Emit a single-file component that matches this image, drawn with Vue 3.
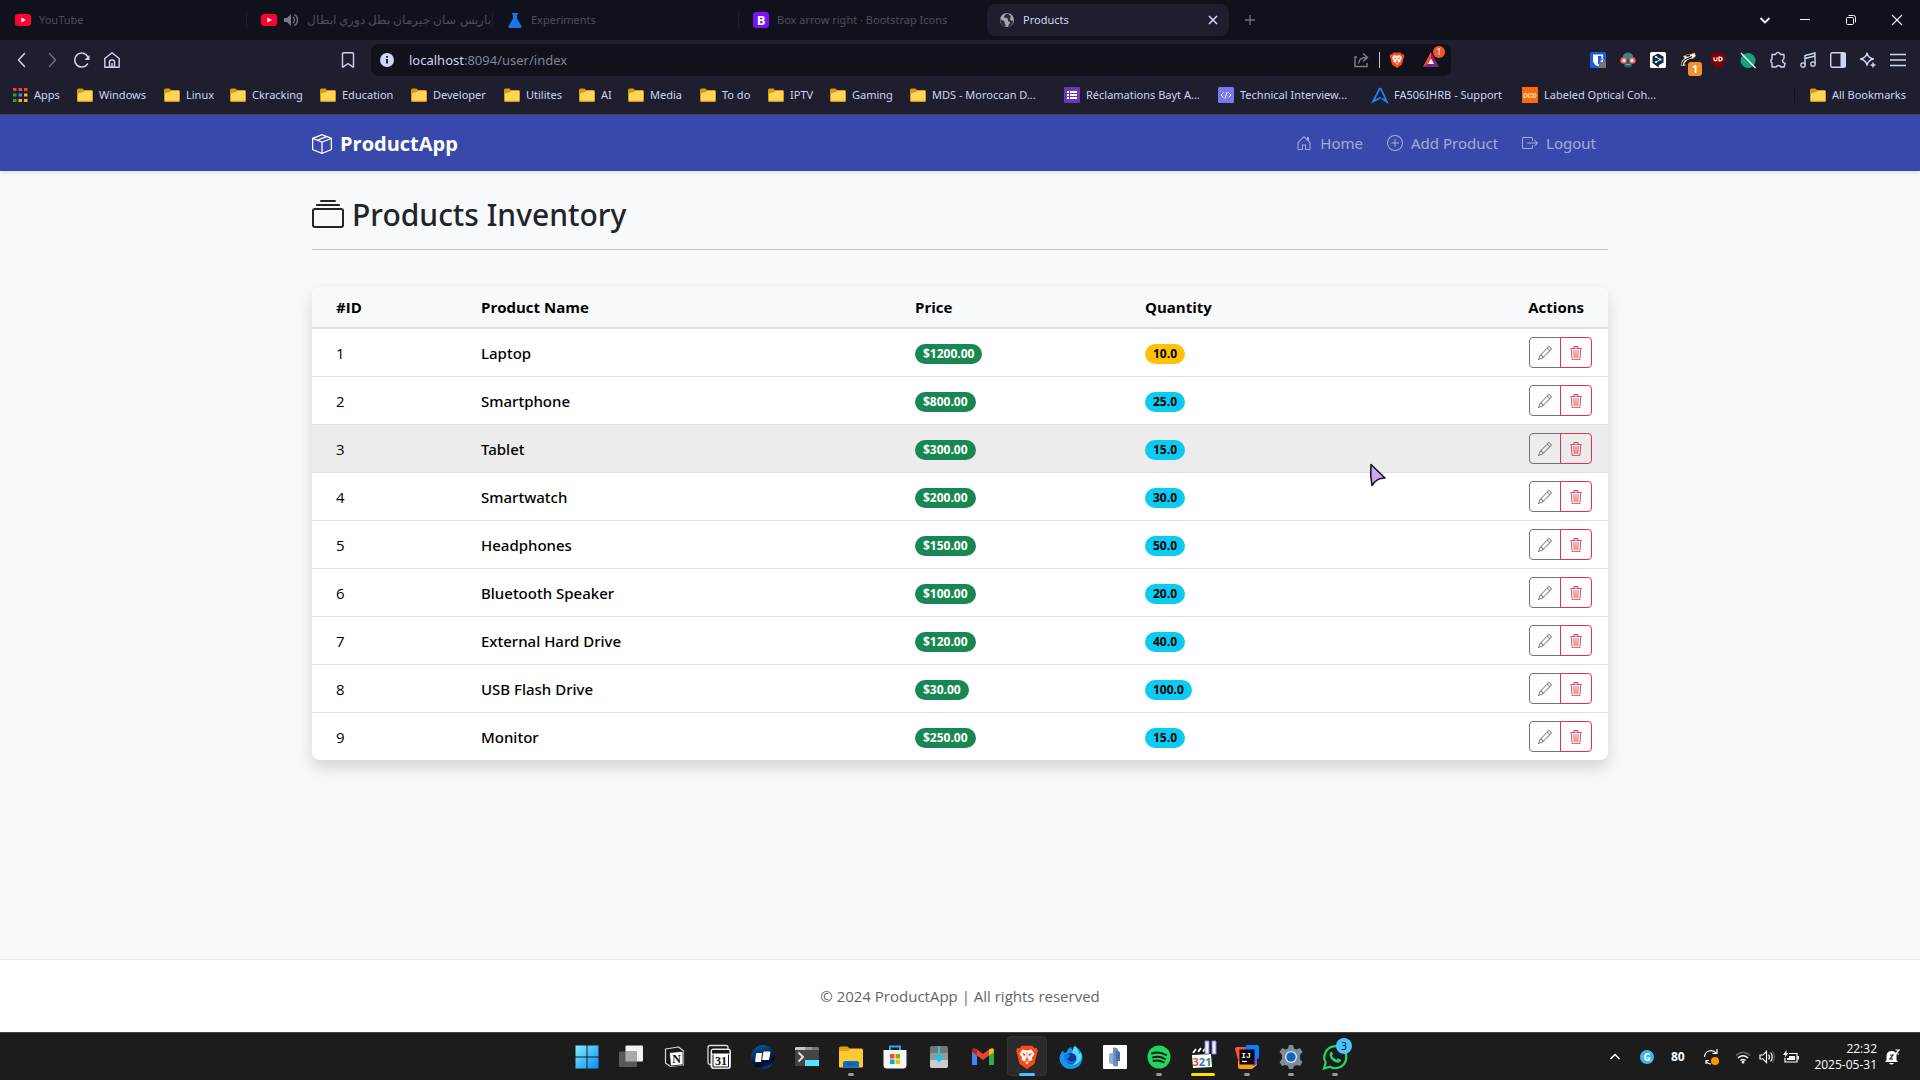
<script setup>
import { ref } from 'vue'

const art = {
  youtube: '<rect x="0" y="2" width="16" height="12" rx="3" fill="#ff0033"/><path d="M6.3 5.4v5.2L10.8 8z" fill="#fff"/>',
  speaker: '<path d="M1 6h3l4-4v12l-4-4H1z" fill="#777987"/><path d="M10 5c2 1.500 2 4.500 0 6M11.500 2.500c4 2.500 4 8.500 0 11" fill="none" stroke="#777987" stroke-width="1.300"/>',
  flask: '<path d="M5 1h6v1.500h-1v4l4.500 7.500q.6 2-1.500 2H3q-2.100 0-1.500-2L6 6.500v-4H5z" fill="#1a73e8"/>',
  bootstrap: '<rect width="16" height="16" rx="3" fill="#7a14f8"/><text x="8" y="13" text-anchor="middle" font-size="13" font-weight="700" font-family="Open Sans, sans-serif" fill="#fff">B</text>',
  globe: '<circle cx="8" cy="8" r="7" fill="#a3a7ac"/><path d="M9 1.500c-3 1-4 2-4 3.500 1.500 1.500 4 .5 4 2.500-1 2 2 1.500 2 3.500-1 2-2 2-2 3.500 3 0 5-2.500 5-6-2 1-3-.5-3-2 1-1.500 1-2 0-3zM1.500 7c1.500 1.500 4 1.500 4 3s1.500 2 1 4.500C3 14 1 11 1.500 7z" fill="#2a2c38"/>',
  close: '<path d="M4 4l8 8M12 4l-8 8" stroke="currentColor" stroke-width="1.600" fill="none"/>',
  plus: '<path d="M8 3v10M3 8h10" stroke="currentColor" stroke-width="1.300" fill="none"/>',
  chevDown: '<path d="M3.500 6L8 10.500 12.500 6" stroke="currentColor" stroke-width="1.800" fill="none"/>',
  chevUp: '<path d="M3.500 10L8 5.500 12.500 10" stroke="currentColor" stroke-width="1.500" fill="none"/>',
  minimize: '<path d="M3 7.500h10" stroke="currentColor" fill="none"/>',
  restore: '<rect x="3.500" y="5.500" width="7" height="7" rx="1" stroke="currentColor" fill="none"/><path d="M5.500 3.500h5q2 0 2 2v5" stroke="currentColor" fill="none"/>',
  winClose: '<path d="M3 3l10 10M13 3L3 13" stroke="currentColor" stroke-width="1.100" fill="none"/>',
  back: '<path d="M10.500 1.500L4.500 8l6 6.500" stroke="currentColor" stroke-width="1.500" fill="none" stroke-linecap="round" stroke-linejoin="round"/>',
  forward: '<path d="M5.500 1.500l6 6.500-6 6.500" stroke="currentColor" stroke-width="1.500" fill="none" stroke-linecap="round" stroke-linejoin="round"/>',
  reload: '<path d="M13.500 12A7 7 0 1 1 14 5" stroke="currentColor" stroke-width="1.500" fill="none" stroke-linecap="round"/><path d="M15.500 3v5h-5z" fill="currentColor"/>',
  home: '<path d="M.8 6.500L8 .8l7.200 5.700v8.700H.8zM5.500 15V9.500q0-1.500 2.500-1.500t2.500 1.500V15M8 15v-4" stroke="currentColor" stroke-width="1.400" fill="none" stroke-linejoin="round"/>',
  bookmark: '<path d="M2.500 2q0-1.200 1.200-1.200h8.600q1.200 0 1.200 1.200v12.600q0 .9-.8.3L8 11.500l-4.700 3.400q-.8.6-.8-.3z" stroke="currentColor" stroke-width="1.400" fill="none"/>',
  info: '<circle cx="8" cy="8" r="7" fill="#cdd6f4"/><path d="M8 7v4.500M8 4v1.800" stroke="#11111b" stroke-width="1.800"/>',
  share: '<path d="M3 5H1v9.500h12V11M4.500 11.500C5 7 8 5.500 12 5.500M9 1.500l4.500 4L9 9.500" stroke="#7d8091" stroke-width="1.400" fill="none"/>',
  brave: '<path d="M4.500.5h7L13 2.200l1.500-.2.800 2.200-.5 1L13 12.500 8 16 3 12.500 1.200 5.200l-.5-1L1.500 2l1.500.2z" fill="#fb4a16"/><path d="M5 3l3 .7L11 3l2 3-1.700 2.300.3 1.700-2 .8L8 13l-1.600-2.200-2-.8.3-1.700L3 6z" fill="#fff"/><path d="M5 5.500l1.700.7-.4 1.300zM11 5.500l-1.700.7.4 1.300zM8 4.500v4l-1 1.200h2L8 8.500M6.500 11L8 10l1.500 1z" fill="#fb4a16" stroke="#fb4a16" stroke-width=".4"/>',
  bat: '<path d="M8 0L0 15h16z" fill="#9e1f63"/><path d="M8 0L0 15l5-3 3-5.500z" fill="#ff4724"/><path d="M0 15h16l-5-3H5z" fill="#662d91"/><path d="M8 6.500L5 12h6z" fill="#fff"/>',
  folder: '<path d="M0 3q0-1.500 1.500-1.500h3.800L7 3h7.500Q16 3 16 4.500v9q0 1.500-1.500 1.500h-13Q0 15 0 13.500z" fill="#d79b13"/><path d="M1 6.500L6 5l1.500-1H15v9.800H1z" fill="#ffd65c"/>',
  apps: '<path d="M1 1h3.500v3H1zM6.500 1H10v3H6.500zM12 1h3.500v3H12z" fill="#f04438"/><path d="M1 6.500h3.500v3H1zM1 12h3.500v3H1z" fill="#2e9e4f"/><path d="M6.500 6.500H10v3H6.500z" fill="#2d8cff"/><path d="M12 6.500h3.500v3H12zM6.500 12H10v3H6.500zM12 12h3.500v3H12z" fill="#fbb114"/>',
  form: '<rect width="16" height="16" rx="1" fill="#673ab7"/><path d="M3 4h2v2H3zM6 4h7v2H6zM3 7h2v2H3zM6 7h7v2H6zM3 10h2v2H3zM6 10h7v2H6z" fill="#fff"/>',
  code: '<rect width="16" height="16" rx="1.500" fill="#7b78ee"/><path d="M5.500 5.500L3 8l2.500 2.500M10.500 5.500L13 8l-2.500 2.500M9 5l-2 6.500" stroke="#fff" stroke-width="1" fill="none"/>',
  asus: '<path d="M8.500 1L15 15l-5-3.500M8 1L1 14.500l8-4" fill="none" stroke="#1b86ff" stroke-width="1.700"/>',
  dcd: '<rect width="16" height="16" fill="#ff6b0a"/><text x="8" y="10.500" text-anchor="middle" font-size="7" font-weight="700" font-family="Roboto, sans-serif" fill="#ffe5d0">DCD</text>',
  shieldLock: '<rect width="16" height="16" rx="1.500" fill="#175ddc"/><path d="M3 2.500h10V9q-1 3.500-5 5.500Q4 12.500 3 9z" fill="#fff"/><path d="M8 4h3.500v4.500Q11 11 8 12.500z" fill="#175ddc"/><rect x="9" y="10" width="7" height="6" rx="1" fill="#777"/><path d="M10.500 10V8.500q2-2.500 4 0V10" fill="none" stroke="#888" stroke-width="1.200"/>',
  agent: '<path d="M2.500 7Q2.500 .5 8 .5t5.500 6.500z" fill="#3f8189"/><rect x="4" y="7" width="8" height="8.500" rx="2" fill="#2d5560"/><circle cx="3.500" cy="8.500" r="3.200" fill="#f2604b"/><circle cx="12.500" cy="8.500" r="3.200" fill="#f2604b"/><circle cx="4" cy="8.500" r="1.700" fill="#ffe9e4"/><circle cx="12" cy="8.500" r="1.700" fill="#ffe9e4"/><path d="M5.500 12.500h5" stroke="#56b6c2" stroke-width="1.500"/>',
  deepl: '<rect width="16" height="16" rx="1.500" fill="#fff"/><path d="M8 1.500l5.500 3v6L9 13l-.5 2.500L2.500 11V4.500z" fill="#0f2b46"/><path d="M6 5l4.500 2.500L6 10" stroke="#fff" fill="none"/><circle cx="6" cy="5" r="1.100" fill="#fff"/><circle cx="10.500" cy="7.500" r="1.100" fill="#fff"/><circle cx="6" cy="10" r="1.100" fill="#fff"/>',
  badger: '<path d="M1 13.500Q1.500 8 5 6L3.500 4.500Q7 2 11 2.500L14.500 1 15.500 4 13 6.500H9.500L6 9.500 5 13.500z" fill="#fff" stroke="#ef9b4a" stroke-width=".8"/><path d="M2 13Q3 8.500 6.500 7L12 4.500M6 4l4-.5M4.500 12.500L8 8.500" stroke="#171717" stroke-width="1.300" fill="none"/>',
  ublock: '<path d="M8 0l7 2.200V8q0 4.500-7 8Q1 12.500 1 8V2.200z" fill="#800000"/><path d="M4 5.200v2q0 1.600 1.500 1.600T7 7.200v-2M9 8.800V5.200q3.200 0 3.200 1.800T9 8.800z" fill="none" stroke="#fff" stroke-width="1.200"/>',
  disabledDot: '<circle cx="8" cy="8.500" r="7.500" fill="#14a37f"/><path d="M1 1l14.500 15" stroke="#fff" stroke-width="1.200"/>',
  puzzle: '<path d="M2 2.500h3.500Q6 .5 8 .5t2.500 2H14v4q-1.500 1-1.500 2.500T15 11.500l-1 3.500h-3q-1-1.500-2.500-1.500T6 15H2v-4Q.8 10.500.8 9T2 7z" stroke="currentColor" stroke-width="1.400" fill="none" stroke-linejoin="round"/>',
  music: '<path d="M5 13V3.500L15 1v10.500M5 6.500L15 4" stroke="currentColor" stroke-width="1.400" fill="none"/><circle cx="3" cy="13" r="2.200" stroke="currentColor" stroke-width="1.300" fill="none"/><circle cx="13" cy="12" r="2.200" stroke="currentColor" stroke-width="1.300" fill="none"/>',
  sidebar: '<rect x=".7" y=".7" width="14.600" height="14.600" rx="1.500" stroke="currentColor" stroke-width="1.400" fill="none"/><path d="M10.500 1h5v14h-5z" fill="currentColor"/>',
  sparkle: '<path d="M7 1q1 5 6.500 6Q8 8 7 13.500 6 8 .5 7 6 6 7 1z" stroke="currentColor" stroke-width="1.300" fill="none" stroke-linejoin="round"/><path d="M13 10.500v5M10.500 13h5" stroke="currentColor" stroke-width="1.500"/>',
  menu: '<path d="M0 2.500h16M0 8h16M0 13.500h16" stroke="currentColor" stroke-width="1.500"/>',
  box: '<path fill="currentColor" d="M8.186 1.113a.5.5 0 0 0-.372 0L1.846 3.5l2.404.961L10.404 2zm3.564 1.426L5.596 5 8 5.961 14.154 3.5zm3.250 1.700-6.500 2.600v7.922l6.500-2.600V4.240zM7.500 14.762V6.838L1 4.239v7.923zM7.443.184a1.500 1.500 0 0 1 1.114 0l7.129 2.852A.5.5 0 0 1 16 3.500v8.662a1 1 0 0 1-.629.928l-7.185 2.874a.5.5 0 0 1-.372 0L.63 13.090a1 1 0 0 1-.63-.928V3.500a.5.5 0 0 1 .314-.464z"/>',
  houseDoor: '<path fill="currentColor" d="M8.354 1.146a.5.5 0 0 0-.708 0l-6 6A.5.5 0 0 0 1.500 7.500v7a.5.5 0 0 0 .5.5h4.500a.5.5 0 0 0 .5-.5v-4h2v4a.5.5 0 0 0 .5.5H14a.5.5 0 0 0 .5-.5v-7a.5.5 0 0 0-.146-.354L13 5.793V2.500a.5.5 0 0 0-.5-.5h-1a.5.5 0 0 0-.5.5v1.293zM2.500 14V7.707l5.500-5.500 5.500 5.500V14H10v-4a.5.5 0 0 0-.5-.5h-3a.5.5 0 0 0-.5.5v4z"/>',
  plusCircle: '<path fill="currentColor" d="M8 15A7 7 0 1 1 8 1a7 7 0 0 1 0 14m0 1A8 8 0 1 0 8 0a8 8 0 0 0 0 16"/><path fill="currentColor" d="M8 4a.5.5 0 0 1 .5.5v3h3a.5.5 0 0 1 0 1h-3v3a.5.5 0 0 1-1 0v-3h-3a.5.5 0 0 1 0-1h3v-3A.5.5 0 0 1 8 4"/>',
  boxArrow: '<path fill="currentColor" d="M10 12.500a.5.5 0 0 1-.5.5h-8a.5.5 0 0 1-.5-.5v-9a.5.5 0 0 1 .5-.5h8a.5.5 0 0 1 .5.5v2a.5.5 0 0 0 1 0v-2A1.500 1.500 0 0 0 9.500 2h-8A1.500 1.500 0 0 0 0 3.500v9A1.500 1.500 0 0 0 1.500 14h8a1.500 1.500 0 0 0 1.500-1.500v-2a.5.5 0 0 0-1 0z"/><path fill="currentColor" d="M15.854 8.354a.5.5 0 0 0 0-.708l-3-3a.5.5 0 0 0-.708.708L14.293 7.500H5.500a.5.5 0 0 0 0 1h8.793l-2.147 2.146a.5.5 0 0 0 .708.708z"/>',
  collection: '<path fill="currentColor" d="M2.500 3.500a.5.5 0 0 1 0-1h11a.5.5 0 0 1 0 1zm2-2a.5.5 0 0 1 0-1h7a.5.5 0 0 1 0 1zM0 13a1.500 1.500 0 0 0 1.500 1.500h13A1.500 1.500 0 0 0 16 13V6a1.500 1.500 0 0 0-1.500-1.500h-13A1.500 1.500 0 0 0 0 6zm1.500.5A.5.5 0 0 1 1 13V6a.5.5 0 0 1 .5-.5h13a.5.5 0 0 1 .5.5v7a.5.5 0 0 1-.5.5z"/>',
  pencil: '<path fill="currentColor" d="M12.146.146a.5.5 0 0 1 .708 0l3 3a.5.5 0 0 1 0 .708l-10 10a.5.5 0 0 1-.168.110l-5 2a.5.5 0 0 1-.65-.65l2-5a.5.5 0 0 1 .110-.168zM11.207 2.500 13.500 4.793 14.793 3.500 12.500 1.207zm1.586 3L10.500 3.207 4 9.707V10h.5a.5.5 0 0 1 .5.5v.5h.5a.5.5 0 0 1 .5.5v.5h.293zm-9.761 5.175-.106.106-1.528 3.821 3.821-1.528.106-.106A.5.5 0 0 1 5 12.500V12h-.5a.5.5 0 0 1-.5-.5V11h-.5a.5.5 0 0 1-.468-.325"/>',
  trash: '<path fill="currentColor" d="M6.500 1h3a.5.5 0 0 1 .5.5v1H6v-1a.5.5 0 0 1 .5-.5M11 2.500v-1A1.500 1.500 0 0 0 9.500 0h-3A1.500 1.500 0 0 0 5 1.500v1H1.500a.5.5 0 0 0 0 1h.538l.853 10.660A2 2 0 0 0 4.885 16h6.230a2 2 0 0 0 1.994-1.840l.853-10.660h.538a.5.5 0 0 0 0-1zm1.958 1-.846 10.580a1 1 0 0 1-.997.920h-6.230a1 1 0 0 1-.997-.920L3.042 3.500zm-7.487 1a.5.5 0 0 1 .528.470l.5 8.500a.5.5 0 0 1-.998.060L5 5.030a.5.5 0 0 1 .470-.530Zm5.058 0a.5.5 0 0 1 .470.530l-.5 8.500a.5.5 0 1 1-.998-.060l.5-8.500a.5.5 0 0 1 .528-.470M8 4.500a.5.5 0 0 1 .5.5v8.500a.5.5 0 0 1-1 0V5a.5.5 0 0 1 .5-.5"/>',
}

/* Taskbar artwork is drawn on a 24 x 24 grid. */
const taskArt = {
  start: '<defs><linearGradient id="win" x1="0" y1="0" x2="1" y2="1"><stop offset="0" stop-color="#7df0ff"/><stop offset="1" stop-color="#0a8cf8"/></linearGradient></defs><path d="M.5.5h11v11H.5zM12.500.5h11v11h-11zM.5 12.500h11v11H.5zM12.500 12.500h11v11h-11z" fill="url(#win)"/>',
  taskView: '<rect x="6.500" y=".5" width="17.500" height="16" rx="1" fill="#f2f2f2"/><rect x="0" y="6.500" width="18" height="15.500" rx="1" fill="#5a5a5a"/><path d="M6.500 6.500H18v10H6.500z" fill="#a9a9a9"/>',
  notion: '<path d="M2.500 4l13-2 5 4v14l-13 1.500L2.500 18z" fill="#181818" stroke="#d8d8d8" stroke-width="1.200" stroke-linejoin="round"/><path d="M6.500 7.500L20 6.300v13.500L7.500 21z" fill="#fff" stroke="#111" stroke-width=".8"/><text x="13.500" y="18" text-anchor="middle" font-size="12" font-weight="700" font-family="Liberation Serif, serif" fill="#111">N</text>',
  calendar: '<rect x="1" y=".5" width="20" height="19" rx="2" fill="#171717" stroke="#ddd" stroke-width="1.300"/><rect x="4" y="4" width="19.500" height="19.500" rx="2" fill="#fff" stroke="#ddd"/><path d="M5 8.500h17.500V6q0-1-1-1H6Q5 5 5 6z" fill="#171717"/><path d="M6 9.500v12.500h15.500V9.500" fill="none" stroke="#171717" stroke-width="1"/><text x="14" y="20" text-anchor="middle" font-size="12" font-weight="700" font-family="Liberation Serif, serif" fill="#111">31</text>',
  tide: '<defs><linearGradient id="tide" x1=".2" y1="0" x2=".6" y2="1"><stop offset="0" stop-color="#0a5c9c"/><stop offset=".5" stop-color="#042652"/><stop offset=".8" stop-color="#020a2c"/><stop offset="1" stop-color="#0a4a86"/></linearGradient></defs><circle cx="12" cy="12" r="12" fill="url(#tide)"/><path d="M6 8h5l-1 9H5q-1 0-.8-1.200L5 9q.2-1 1-1zM12.500 6.500h6q1 0 .8 1.200l-1 6.300q-.2 1-1.200 1h-6z" fill="#fff"/>',
  terminal: '<rect y="2" width="24" height="19" rx="1.500" fill="#444"/><path d="M0 5V3.500Q0 2 1.500 2H10v3z" fill="#c8c8c8"/><path d="M10 2h7v3h-7z" fill="#999"/><path d="M17 2h5.500Q24 2 24 3.500V5h-7z" fill="#777"/><path d="M3.500 7.500L8 12l-4.500 4.500" fill="none" stroke="#ddd" stroke-width="2"/><rect x="10" y="15" width="14" height="6" fill="#50e6ff"/>',
  explorer: '<path d="M0 3q0-1.500 1.500-1.500h7L11 4v5H0z" fill="#e5a00d"/><path d="M0 6h9l2-2.500h11.500Q24 3.500 24 5v16.500q0 1-1 1H1q-1 0-1-1z" fill="#ffca2f"/><path d="M4 22.500V18q0-2 2-2h12q2 0 2 2v4.500z" fill="#0a6fc9"/><path d="M8 19h8" stroke="#064b92"/>',
  store: '<path d="M7 6V1.500h10V6" fill="none" stroke="#22aef0" stroke-width="2"/><path d="M.5 5h23v15q0 3.500-3.500 3.500H4Q.5 23.500.5 20z" fill="#f6f6f6"/><path d="M7 9h4.500v4.500H7z" fill="#f25022"/><path d="M12.500 9H17v4.500h-4.500z" fill="#7fba00"/><path d="M7 14.500h4.500V19H7z" fill="#00a4ef"/><path d="M12.500 14.500H17V19h-4.500z" fill="#ffb900"/>',
  download: '<rect x="3" y="1" width="18" height="22" rx="2" fill="#777"/><path d="M3 8h18v7H3z" fill="#999"/><path d="M3 15h18v6q0 2-2 2H5q-2 0-2-2z" fill="#ccc"/><path d="M12 1v14M7 11l5 5 5-5" stroke="#12ccf5" stroke-width="2" fill="none"/>',
  gmail: '<path d="M1 20V5.500L6 9v11H2.500Q1 20 1 20z" fill="#4285f4"/><path d="M18 9l5-3.500V20h-5z" fill="#34a853"/><path d="M18 4.500q5-3 5 1V7l-5 3.500z" fill="#fbbc04"/><path d="M6 4.500l6 4.500 6-4.500v6L12 15l-6-4.500z" fill="#ea4335"/><path d="M1 5.500q0-4 5-1v6L1 7z" fill="#c5221f"/>',
  firefox: '<path d="M12 24C4 24 .5 18 .5 12.500 1 9 2.500 7 4 5.500L5 8l3-1c0-2 1-4 4-5 0 2 2 3 3 4l1-5.500c4 3 7.500 7 7.500 12C23.500 19 18.500 24 12 24z" fill="#1397f0"/><path d="M15 1c4 3 5 5 5 8l2-1c2 6-2 11-8 12 4-4 3-9-1-11z" fill="#57dcff"/><circle cx="12" cy="13.500" r="5.500" fill="#17349b"/><path d="M5 9l6 1-1 3H8c1 4 6 5 9 2-1 5-11 5-12-3z" fill="#167ae6"/>',
  document: '<rect width="24" height="24" rx="1" fill="#fff"/><path d="M6 9.500Q6 8 8 8h5v11q-7 1-7-2z" fill="#8fb0d6"/><path d="M10 2.500q5 0 5 2V21q-5 1.500-5-1.500z" fill="#6d8fbd"/><path d="M13 5.500q4 0 4 2.500v8h-4z" fill="#4c70a4"/>',
  spotify: '<circle cx="12" cy="12" r="11.500" fill="#1ed760"/><path d="M5 8.500q7-2.500 14 1.500M6 12.500q6-2 12 1.500M6.500 16q5-1.500 10 1.200" stroke="#171717" stroke-width="2" fill="none" stroke-linecap="round"/>',
  mpc: '<path d="M1 5l20-3v5L1 9z" fill="#111"/><path d="M2 8l3-4M7 7l3-4M12 6.500l3-4" stroke="#fff" stroke-width="2"/><path d="M1 10l19-1 1 13-19 1z" fill="#fff"/><text x="11" y="20.500" text-anchor="middle" font-size="11" font-weight="700" font-family="Open Sans, sans-serif"><tspan fill="#cd552c">3</tspan><tspan fill="#2f75ca">2</tspan><tspan fill="#3b8d38">1</tspan></text><path d="M14-4h4V9h-4zM21-4h4V9h-4z" fill="#eef0ff" stroke="#7a7fd0"/>',
  idea: '<path d="M0 4q0-2 2-2h10v18L3.500 17z" fill="#ff4f3a"/><path d="M10 2l2-2h10q2 0 2 2v11l-4 3H10z" fill="#0a7cff"/><path d="M3 16h17l2-2v6l-5 4H5q-2 0-2-2z" fill="#ff9a1f"/><path d="M16 19.500h3.500V12l2.500 2v5l-3 2z" fill="#7b4be0"/><rect x="4.500" y="4.500" width="15" height="15" fill="#000"/><text x="11" y="12.500" text-anchor="middle" font-size="8" font-weight="700" font-family="Liberation Mono, monospace" fill="#fff">IJ</text><path d="M7 16.500h5" stroke="#fff" stroke-width="1.200"/>',
  settings: '<path d="M10 0h4l1 3.500 2.500 1L21 3l2.500 4-2.500 3v4l2.500 3L21 21l-3.500-1-2.500 1-1 3h-4l-1-3-2.500-1L3 21 .5 17 3 14v-4L.5 7 3 3l3.500 1.500 2.500-1z" fill="#7f8b97"/><circle cx="12" cy="12" r="6" fill="#dfe5eb"/><circle cx="12" cy="12" r="4.700" fill="#0b68bf"/>',
  whatsapp: '<path d="M1 23.500l1.700-6A11 11 0 1 1 7 21.800z" fill="none" stroke="#25d366" stroke-width="2.200"/><path d="M7 7.500q2-2 3 1.500l-1 1.700q1.500 3 4.500 4l1.500-1.500 3 1.500q0 3-3.500 3-7-1.500-8-8z" fill="#25d366"/>',
}
taskArt.brave = `<g transform="scale(1.5)">${art.brave}</g>`

const tabs = [
  { title: 'YouTube', icons: ['youtube'] },
  { title: 'باريس سان جيرمان بطل دوري ابطال', icons: ['youtube', 'speaker'], rtl: true },
  { title: 'Experiments', icons: ['flask'] },
  { title: 'Box arrow right · Bootstrap Icons', icons: ['bootstrap'] },
]

const windowControls = [
  ['chevDown', 'Search tabs'],
  ['minimize', 'Minimize'],
  ['restore', 'Restore'],
  ['winClose', 'Close window'],
]

const navButtons = [
  ['back', 'Back'],
  ['forward', 'Forward'],
  ['reload', 'Reload'],
  ['home', 'Home page'],
]

const extensions = [
  ['shieldLock', 'Password manager'],
  ['agent', 'User agent'],
  ['deepl', 'Translate'],
  ['badger', 'Tracker blocker', '1'],
  ['ublock', 'Ad blocker'],
  ['disabledDot', 'Paused extension'],
  ['puzzle', 'Extensions'],
  ['music', 'Media'],
  ['sidebar', 'Sidebar'],
  ['sparkle', 'Assistant'],
  ['menu', 'Menu'],
]

const bookmarks = [
  ['apps', 'Apps'],
  ['folder', 'Windows'],
  ['folder', 'Linux'],
  ['folder', 'Ckracking'],
  ['folder', 'Education'],
  ['folder', 'Developer'],
  ['folder', 'Utilites'],
  ['folder', 'AI'],
  ['folder', 'Media'],
  ['folder', 'To do'],
  ['folder', 'IPTV'],
  ['folder', 'Gaming'],
  ['folder', 'MDS - Moroccan D...'],
  ['form', 'Réclamations Bayt A...'],
  ['code', 'Technical Interview...'],
  ['asus', 'FA506IHRB - Support'],
  ['dcd', 'Labeled Optical Coh...'],
]

const links = [
  ['houseDoor', 'Home'],
  ['plusCircle', 'Add Product'],
  ['boxArrow', 'Logout'],
]

const products = [
  { id: 1, name: 'Laptop', price: 1200, quantity: 10 },
  { id: 2, name: 'Smartphone', price: 800, quantity: 25 },
  { id: 3, name: 'Tablet', price: 300, quantity: 15 },
  { id: 4, name: 'Smartwatch', price: 200, quantity: 30 },
  { id: 5, name: 'Headphones', price: 150, quantity: 50 },
  { id: 6, name: 'Bluetooth Speaker', price: 100, quantity: 20 },
  { id: 7, name: 'External Hard Drive', price: 120, quantity: 40 },
  { id: 8, name: 'USB Flash Drive', price: 30, quantity: 100 },
  { id: 9, name: 'Monitor', price: 250, quantity: 15 },
]

const hovered = ref(3)

const tasks = [
  { art: 'start', label: 'Start' },
  { art: 'taskView', label: 'Task view' },
  { art: 'notion', label: 'Notion' },
  { art: 'calendar', label: 'Calendar' },
  { art: 'tide', label: 'Notes' },
  { art: 'terminal', label: 'Terminal' },
  { art: 'explorer', label: 'File Explorer', state: 'open' },
  { art: 'store', label: 'Store' },
  { art: 'download', label: 'Downloads' },
  { art: 'gmail', label: 'Gmail' },
  { art: 'brave', label: 'Brave', state: 'active' },
  { art: 'firefox', label: 'Firefox' },
  { art: 'document', label: 'Reader' },
  { art: 'spotify', label: 'Spotify', state: 'open' },
  { art: 'mpc', label: 'Media player', state: 'paused' },
  { art: 'idea', label: 'IntelliJ IDEA', state: 'open' },
  { art: 'settings', label: 'Settings', state: 'open' },
  { art: 'whatsapp', label: 'WhatsApp', state: 'open', badge: '3' },
]
</script>

<template>
  <div class="screen">
    <header class="browser">
      <div class="tab-strip">
        <button v-for="tab in tabs" :key="tab.title" type="button" class="tab">
          <svg v-for="icon in tab.icons" :key="icon" class="icon" viewBox="0 0 16 16" v-html="art[icon]" />
          <span class="tab-title" :class="{ rtl: tab.rtl }">{{ tab.title }}</span>
        </button>
        <div class="tab current">
          <svg class="icon" viewBox="0 0 16 16" v-html="art.globe" />
          <span class="tab-title">Products</span>
          <button type="button" class="bare" aria-label="Close tab">
            <svg class="icon" viewBox="0 0 16 16" v-html="art.close" />
          </button>
        </div>
        <button type="button" class="bare new-tab" aria-label="New tab">
          <svg class="icon" viewBox="0 0 16 16" v-html="art.plus" />
        </button>
        <div class="window-controls">
          <button v-for="[icon, label] in windowControls" :key="icon" type="button" class="bare" :aria-label="label">
            <svg class="icon" viewBox="0 0 16 16" v-html="art[icon]" />
          </button>
        </div>
      </div>

      <div class="toolbar">
        <div class="nav-side">
          <button v-for="[icon, label] in navButtons" :key="icon" type="button" class="bare tool" :class="icon" :aria-label="label">
            <svg class="icon" viewBox="0 0 16 16" v-html="art[icon]" />
          </button>
          <button type="button" class="bare tool save" aria-label="Bookmark this page">
            <svg class="icon" viewBox="0 0 16 16" v-html="art.bookmark" />
          </button>
        </div>
        <div class="address">
          <svg class="icon" viewBox="0 0 16 16" v-html="art.info" />
          <span class="url"><b>localhost</b>:8094/user/index</span>
          <button type="button" class="bare" aria-label="Share">
            <svg class="icon" viewBox="0 0 16 16" v-html="art.share" />
          </button>
          <span class="bar"></span>
          <button type="button" class="bare" aria-label="Shields">
            <svg class="icon" viewBox="0 0 16 16" v-html="art.brave" />
          </button>
          <button type="button" class="bare bat" aria-label="Rewards">
            <svg class="icon" viewBox="0 0 16 16" v-html="art.bat" />
            <span class="dot-badge">1</span>
          </button>
        </div>
        <div class="extensions">
          <button v-for="[icon, label, count] in extensions" :key="icon" type="button" class="bare tool" :aria-label="label">
            <svg class="icon" viewBox="0 0 16 16" v-html="art[icon]" />
            <span v-if="count" class="count">{{ count }}</span>
          </button>
        </div>
      </div>

      <div class="bookmarks">
        <nav class="bookmark-list" aria-label="Bookmarks">
          <a v-for="[icon, label] in bookmarks" :key="label" href="#" class="bookmark">
            <svg class="icon" viewBox="0 0 16 16" v-html="art[icon]" />
            <span>{{ label }}</span>
          </a>
        </nav>
        <a href="#" class="bookmark all">
          <svg class="icon" viewBox="0 0 16 16" v-html="art.folder" />
          <span>All Bookmarks</span>
        </a>
      </div>
    </header>

    <div class="page">
      <nav class="navbar" aria-label="Main">
        <div class="container navbar-inner">
          <a href="#" class="brand">
            <svg viewBox="0 0 16 16" v-html="art.box" />
            <span>ProductApp</span>
          </a>
          <div class="nav-links">
            <a v-for="[icon, label] in links" :key="icon" href="#">
              <svg class="icon" viewBox="0 0 16 16" v-html="art[icon]" />
              <span>{{ label }}</span>
            </a>
          </div>
        </div>
      </nav>

      <main class="container content">
        <h1>
          <svg viewBox="0 0 16 16" v-html="art.collection" />
          <span>Products Inventory</span>
        </h1>
        <hr>
        <div class="card">
          <table>
            <colgroup>
              <col class="c-id">
              <col class="c-name">
              <col class="c-price">
              <col class="c-qty">
              <col>
            </colgroup>
            <thead>
              <tr>
                <th>#ID</th>
                <th>Product Name</th>
                <th>Price</th>
                <th>Quantity</th>
                <th class="actions">Actions</th>
              </tr>
            </thead>
            <tbody>
              <tr v-for="p in products" :key="p.id" :class="{ hover: p.id === hovered }" @mouseenter="hovered = p.id">
                <td>{{ p.id }}</td>
                <td class="name">{{ p.name }}</td>
                <td><span class="pill price">${{ p.price.toFixed(2) }}</span></td>
                <td><span class="pill" :class="p.quantity > 10 ? 'stocked' : 'low'">{{ p.quantity.toFixed(1) }}</span></td>
                <td class="actions">
                  <div class="btn-group">
                    <button type="button" class="btn edit" :aria-label="`Edit ${p.name}`">
                      <svg viewBox="0 0 16 16" v-html="art.pencil" />
                    </button>
                    <button type="button" class="btn delete" :aria-label="`Delete ${p.name}`">
                      <svg viewBox="0 0 16 16" v-html="art.trash" />
                    </button>
                  </div>
                </td>
              </tr>
            </tbody>
          </table>
        </div>
      </main>

      <footer class="footer">© 2024 ProductApp | All rights reserved</footer>
    </div>

    <div class="taskbar">
      <div class="tasks">
        <button v-for="t in tasks" :key="t.art" type="button" class="bare task" :class="t.state" :aria-label="t.label">
          <svg viewBox="0 0 24 24" v-html="taskArt[t.art]" />
          <span v-if="t.badge" class="task-badge">{{ t.badge }}</span>
        </button>
      </div>
      <div class="tray">
        <svg class="icon" viewBox="0 0 16 16" v-html="art.chevUp" />
        <span class="tray-g">G</span>
        <span class="tray-temp">80</span>
        <svg class="icon" viewBox="0 0 16 16">
          <path d="M1.500 8A6.500 6.500 0 0 1 13 4M14 0v4.500H9.500M3 15v-3.500H6M3 12q2 3 5 3" fill="none" stroke="#fff" stroke-width="1.200" />
          <circle cx="12" cy="12" r="4" fill="#ff9800" />
        </svg>
        <div class="status">
          <svg class="icon" viewBox="0 0 16 16">
            <path d="M1 6.500q7-6.500 14 0" fill="none" stroke="#666" stroke-width="1.500" />
            <path d="M3 9q5-4.500 10 0M5.500 11.500q2.500-2 5 0" fill="none" stroke="#fff" stroke-width="1.500" />
            <circle cx="8" cy="13" r="1.500" fill="#fff" />
          </svg>
          <svg class="icon" viewBox="0 0 16 16">
            <path d="M1 6h3l3.500-3.500v11L4 10H1z" fill="none" stroke="#fff" stroke-width="1.200" />
            <path d="M9.500 5.500q2 2.500 0 5M11.500 3.500q3.500 4.500 0 9" fill="none" stroke="#fff" stroke-width="1.200" />
            <path d="M13.500 2q4 6 0 12" fill="none" stroke="#666" />
          </svg>
          <svg class="icon" viewBox="0 0 16 16">
            <path d="M6 4.500h8v8.500H2V9" fill="none" stroke="#fff" stroke-width="1.200" />
            <path d="M6 7h6v4H4V9h2zM14.500 7H16v3.500h-1.500zM3.500 1L0 6h2.500l-1 3L5.500 4H3.500z" fill="#fff" />
          </svg>
        </div>
        <div class="clock">
          <time>22:32</time>
          <time>2025-05-31</time>
        </div>
        <svg class="icon" viewBox="0 0 16 16">
          <path d="M2.500 11V6.500Q3 2 7.500 2q5 0 5 4.500V11l1.500 2H1zM5 14h5q-2.500 3-5 0z" fill="#fff" />
          <path d="M6 6h3l-3 4h3" stroke="#1c1c1c" stroke-width="1.200" fill="none" />
          <path d="M11.500 1h3.500l-3.500 4H15" stroke="#fff" stroke-width="1.200" fill="none" />
        </svg>
      </div>
    </div>

    <svg class="cursor" viewBox="0 0 18 24" aria-hidden="true">
      <path d="M2 1.500L16 15q-8-.5-13 7.500Q1 12 2 1.500z" fill="#cba6f7" stroke="#11111b" stroke-width="1.500" stroke-linejoin="round" />
    </svg>
  </div>
</template>

<style>
body {
  background: #f8f9fa;
}
</style>

<style scoped>
* {
  box-sizing: border-box;
}

.screen {
  position: relative;
  display: flex;
  flex-direction: column;
  min-height: 100vh;
  overflow: hidden;
  font-family: "Open Sans", "Noto Sans", sans-serif;
  font-size: 15px;
  line-height: 24px;
  color: #212529;
}

svg {
  display: block;
  flex: none;
  overflow: visible;
}

.icon {
  width: 16px;
  height: 16px;
}

a {
  color: inherit;
  text-decoration: none;
}

.bare {
  display: flex;
  align-items: center;
  justify-content: center;
  padding: 0;
  border: 0;
  background: none;
  color: inherit;
  font: inherit;
}

/* Browser chrome */
.browser {
  background: #1e1e2e;
  color: #cdd6f4;
  font-family: "Noto Sans", "Open Sans", sans-serif;
  font-size: 11px;
  line-height: 16px;
  border-bottom: 1px solid #45475a;
}

.tab-strip {
  display: flex;
  align-items: center;
  height: 40px;
  padding-left: 1px;
  background: #11111b;
}

.tab {
  display: flex;
  align-items: center;
  gap: 6px;
  width: 246px;
  height: 16px;
  padding: 0 14px;
  border: 0;
  border-right: 1px solid #1e1e2e;
  background: none;
  color: #4c4e5c;
  font: inherit;
  text-align: left;
}

.tab-title {
  flex: 1;
  padding-left: 2px;
  overflow: hidden;
  white-space: nowrap;
}

.tab-title.rtl {
  flex: none;
  direction: rtl;
  font-size: 12px;
}

.tab:nth-child(4) {
  border-right-color: transparent;
}

.tab.current {
  width: 242px;
  height: 32px;
  margin-left: 2px;
  padding: 0 8px 0 12px;
  border: 0;
  border-radius: 8px;
  background: #1e1e2e;
  color: #cdd6f4;
}

.new-tab {
  margin-left: 13px;
  color: #6c7086;
}

.window-controls {
  display: flex;
  gap: 30px;
  margin-left: auto;
  padding-right: 15px;
  color: #f4f5fb;
}

.window-controls button:first-child {
  margin-right: -6px;
}

.toolbar {
  display: flex;
  align-items: center;
  height: 40px;
}

.nav-side {
  display: flex;
  width: 371px;
  padding: 0 8px 0 7px;
}

.tool {
  position: relative;
  width: 30px;
  height: 32px;
}

.forward {
  color: #6c7086;
}

.save {
  margin-left: auto;
}

.address {
  display: flex;
  flex: 1;
  align-items: center;
  gap: 12px;
  height: 32px;
  padding: 0 12px 0 8px;
  border-radius: 8px;
  background: #11111b;
  font-size: 13px;
}

.url {
  flex: 1;
  padding-left: 2px;
  color: #7f849c;
}

.url b {
  color: #cdd6f4;
  font-weight: 400;
}

.bar {
  width: 1px;
  height: 16px;
  margin: 0 -3px;
  background: #bac2de;
}

.bat {
  position: relative;
  margin-left: 6px;
}

.dot-badge {
  position: absolute;
  top: -6px;
  right: -6px;
  width: 12px;
  height: 12px;
  border-radius: 6px;
  background: #fb542b;
  color: #fff;
  font-size: 9px;
  line-height: 12px;
}

.extensions {
  display: flex;
  padding: 0 7px 0 132px;
}

.count {
  position: absolute;
  right: 1px;
  bottom: 0;
  width: 14px;
  height: 14px;
  border-radius: 3px;
  background: #f0932b;
  color: #fff;
  font-size: 10px;
  font-weight: 700;
  line-height: 14px;
}

.bookmarks {
  display: flex;
  align-items: center;
  justify-content: space-between;
  height: 34px;
  padding: 0 14px 4px 12px;
}

.bookmark-list {
  display: grid;
  grid-template-columns: 65px 87px 66px 90px 91px 93px 75px 49px 72px 68px 62px 80px 154px 154px 154px 150px auto;
}

.bookmark {
  display: flex;
  align-items: center;
  gap: 6px;
  white-space: nowrap;
}

.bookmark.all {
  padding-left: 15px;
  border-left: 1px solid #11111b;
}

/* Product application */
.page {
  display: flex;
  flex: 1;
  flex-direction: column;
  background: #f8f9fa;
}

.container {
  width: 100%;
  max-width: 1320px;
  margin: 0 auto;
  padding: 0 12px;
}

.navbar {
  background: #3949ab;
  box-shadow: 0 2px 4px rgba(0, 0, 0, 0.1);
}

.navbar-inner {
  display: flex;
  align-items: center;
  justify-content: space-between;
  height: 56px;
}

.brand {
  display: flex;
  align-items: center;
  gap: 8px;
  padding-top: 2px;
  color: #fff;
  font-size: 20px;
  font-weight: 700;
}

.brand svg {
  width: 20px;
  height: 20px;
}

.nav-links {
  display: flex;
  gap: 24px;
  padding-right: 12px;
  color: rgba(255, 255, 255, 0.55);
  font-family: "Noto Sans", "Open Sans", sans-serif;
}

.nav-links a {
  display: flex;
  align-items: center;
  gap: 8px;
}

.content {
  flex: 1;
}

h1 {
  display: flex;
  align-items: center;
  gap: 8px;
  margin: 24px 0 0;
  font-family: "Noto Sans", "Open Sans", sans-serif;
  font-size: 30px;
  font-weight: 500;
  line-height: 40px;
}

h1 svg {
  width: 32px;
  height: 32px;
}

hr {
  height: 1px;
  margin: 14px 0 37px;
  border: 0;
  background: #c1c3c5;
}

.card {
  overflow: hidden;
  border-radius: 8px;
  background: #fff;
  box-shadow: 0 8px 16px rgba(0, 0, 0, 0.15);
}

table {
  width: 100%;
  border-spacing: 0;
  table-layout: fixed;
  color: #000;
}

.c-id {
  width: 161px;
}

.c-name {
  width: 434px;
}

.c-price {
  width: 230px;
}

.c-qty {
  width: 240px;
}

th {
  height: 42px;
  padding: 0 8px;
  border-bottom: 2px solid #dee2e6;
  background: #f8f9fa;
  font-weight: 700;
  text-align: left;
}

td {
  height: 48px;
  padding: 0 8px;
  border-bottom: 1px solid #dee2e6;
}

th:first-child,
td:first-child {
  padding-left: 24px;
}

tr:last-child td {
  height: 47px;
  border-bottom: 0;
}

tr.hover td {
  background: #ececec;
}

.name {
  font-family: "Noto Sans", "Open Sans", sans-serif;
  font-weight: 500;
}

th.actions {
  padding-right: 24px;
  text-align: right;
}

td.actions {
  padding-right: 16px;
}

.pill {
  display: inline-block;
  height: 20px;
  padding: 0 8px;
  border-radius: 10px;
  font-size: 12px;
  font-weight: 700;
  line-height: 20px;
  vertical-align: middle;
}

.price {
  background: #198754;
  color: #fff;
}

.stocked {
  background: #0dcaf0;
}

.low {
  background: #ffc107;
}

.btn-group {
  display: flex;
  justify-content: flex-end;
}

.btn {
  display: flex;
  align-items: center;
  justify-content: center;
  width: 32px;
  height: 31px;
  padding: 0;
  border: 1px solid;
  background: transparent;
}

.btn svg {
  width: 14px;
  height: 14px;
}

.edit {
  border-radius: 4px 0 0 4px;
  color: #6c757d;
}

.delete {
  margin-left: -1px;
  border-radius: 0 4px 4px 0;
  color: #dc3545;
}

.footer {
  padding: 24px 0;
  border-top: 1px solid #e9ecef;
  background: #fff;
  color: #5f6569;
  text-align: center;
}

/* Taskbar */
.taskbar {
  position: relative;
  display: flex;
  justify-content: center;
  height: 48px;
  border-top: 1px solid #454545;
  background: #1c1c1c;
  color: #fff;
  font-size: 12px;
  line-height: 16px;
}

.tasks {
  display: flex;
  padding-left: 2px;
}

.task {
  position: relative;
  width: 44px;
}

.task svg {
  width: 24px;
  height: 24px;
}

.task.active::before {
  content: "";
  position: absolute;
  inset: 3px 2px 4px;
  border: 1px solid #333;
  border-radius: 4px;
  background: #2b2b2b;
}

.task.active svg {
  position: relative;
}

.task::after {
  position: absolute;
  bottom: 4px;
  left: 50%;
  width: 6px;
  height: 3px;
  border-radius: 2px;
  background: #999;
  transform: translateX(-50%);
}

.task.open::after,
.task.active::after,
.task.paused::after {
  content: "";
}

.task.active::after {
  width: 16px;
  background: #4cc2ff;
}

.task.paused::after {
  width: 24px;
  background: #ffe100;
}

.task-badge {
  position: absolute;
  top: 5px;
  right: 5px;
  width: 16px;
  height: 16px;
  border-radius: 8px;
  background: #4cc2ff;
  color: #111;
  font-size: 11px;
}

.tray {
  position: absolute;
  inset: 0 20px 0 auto;
  display: flex;
  align-items: center;
  gap: 16px;
}

.tray-g {
  width: 16px;
  height: 16px;
  border: 1px solid #1c1c1c;
  border-radius: 8px;
  background: #42b4f4;
  font-size: 10px;
  font-weight: 700;
  line-height: 14px;
  text-align: center;
}

.tray-temp {
  width: 16px;
  font-weight: 700;
}

.status {
  display: flex;
  gap: 8px;
}

.clock {
  display: flex;
  flex-direction: column;
  width: 62px;
  align-items: flex-end;
  font-size: 12px;
  white-space: nowrap;
}

.clock + .icon {
  margin-left: -9px;
}

.cursor {
  position: absolute;
  top: 463px;
  left: 1369px;
  width: 18px;
  height: 24px;
}
</style>
